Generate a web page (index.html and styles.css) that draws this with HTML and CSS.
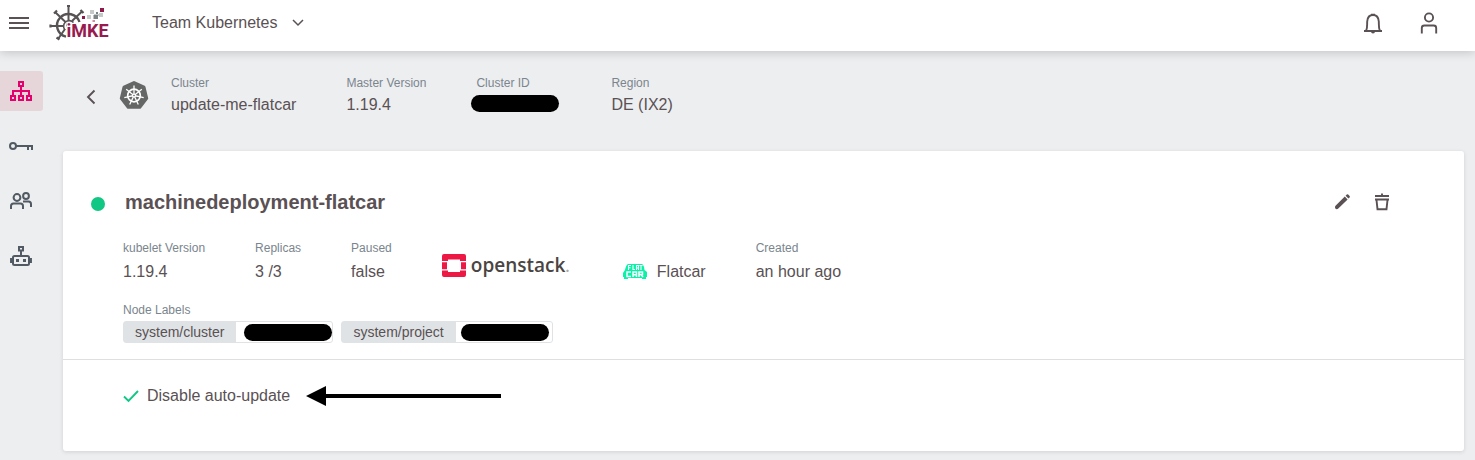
FILE: index.html
```html
<!DOCTYPE html>
<html lang="en">
<head>
<meta charset="utf-8">
<meta name="viewport" content="width=device-width, initial-scale=1">
<title>machinedeployment-flatcar</title>
<link rel="stylesheet" href="styles.css">
</head>
<body>
<header class="topbar">
  <button class="icon-button" aria-label="Menu">
    <svg width="20" height="14" viewBox="0 0 20 14" fill="none" stroke="currentColor" stroke-width="2"><path d="M0 2h20M0 7h20M0 12h20"/></svg>
  </button>
  <a class="brand" href="#" aria-label="iMKE">
    <svg width="62" height="38" viewBox="0 0 62 38">
      <g fill="none" stroke="#575253">
        <path stroke-width="2.400" d="M30.500 18A11.500 11.500 0 1 0 17 32.700"/>
        <path stroke-width="1.600" d="M24.500 18.500A5.500 5.500 0 1 0 16 26"/>
        <path stroke-width="2" d="M19.500 1v15M6 8l10.500 10M33 7.500L23 17M1 22h13M9 35l7-10"/>
        <path stroke-width="2.200" d="M18 2h3M5 9.500L8 6.500M31.500 6l3 3M1.500 20.500v3M7.500 33.500l3 2"/>
      </g>
      <circle cx="19.500" cy="21" r="2.300" fill="#575253"/>
      <text class="brand-name" x="17.500" y="33">iMKE</text>
      <g>
        <path fill="#8e1a4b" d="M51 4h4v4h-4zM33 12h3v3h-3z"/>
        <path fill="#c5c9c9" d="M41 6h4v4h-4zM45 10h5v2h-5zM38 11h4v4h-4zM50 9h4v4h-4z"/>
        <path fill="#7c8485" d="M44.500 11h4.500v4h-4.500zM47 8h2v2h-2z"/>
        <path fill="#d28ba4" d="M43.500 16h2.500v2h-2.500z"/>
      </g>
    </svg>
  </a>
  <button class="project-picker">Team Kubernetes
    <svg width="12" height="8" viewBox="0 0 12 8" fill="none" stroke="currentColor" stroke-width="1.500"><path d="M1 1l5 5 5-5"/></svg>
  </button>
  <div class="topbar-actions">
    <button class="icon-button" aria-label="Notifications">
      <svg width="20" height="22" viewBox="0 0 20 22" fill="none" stroke="currentColor" stroke-width="1.900"><path d="M1 19h18M3.200 18.500C4.500 16 4 13 4.200 9.500 4.500 5 6.500 3 10 3s5.500 2 5.800 6.500c.2 3.500-.3 6.500 1 9"/><path fill="currentColor" stroke="none" d="M8 1.200h4v2H8zM8 19h4a2 2 0 0 1-4 0z" transform="translate(0 .5)"/></svg>
    </button>
    <button class="icon-button" aria-label="Account">
      <svg width="20" height="22" viewBox="0 0 20 22" fill="none" stroke="currentColor" stroke-width="1.900"><circle cx="10" cy="5.500" r="4.100"/><path d="M2.800 21.500v-5.500q0-2.500 2.500-2.500h9.400q2.500 0 2.500 2.500v5.500"/></svg>
    </button>
  </div>
</header>

<div class="shell">
  <nav class="sidebar" aria-label="Project">
    <a class="nav-item nav-item-active" href="#" aria-label="Clusters">
      <svg width="24" height="24" viewBox="0 0 24 24" fill="none" stroke="currentColor" stroke-width="2"><path d="M10 3h4v4h-4zM2 17h4v4H2zM10 17h4v4h-4zM18 17h4v4h-4zM12 7v10M4 17v-5h16v5"/></svg>
    </a>
    <a class="nav-item" href="#" aria-label="SSH Keys">
      <svg width="24" height="24" viewBox="0 0 24 24" fill="none" stroke="currentColor" stroke-width="2"><circle cx="4" cy="12" r="3"/><path d="M7 12h17M19 12v4M23 12v4"/></svg>
    </a>
    <a class="nav-item" href="#" aria-label="Members">
      <svg width="24" height="24" viewBox="0 0 24 24" fill="none" stroke="currentColor" stroke-width="2"><circle cx="8" cy="8.500" r="3.400"/><circle cx="17" cy="7" r="2.900"/><path d="M2 20v-3q0-2.500 2.500-2.500h7q2.500 0 2.500 2.500v3M14 12.500h5.500q2.500 0 2.500 2.500v3"/></svg>
    </a>
    <a class="nav-item" href="#" aria-label="Service Accounts">
      <svg width="24" height="24" viewBox="0 0 24 24" fill="none" stroke="currentColor" stroke-width="2"><path d="M10 3h4v3.500h-4zM12 6v5"/><rect x="4" y="12" width="16" height="9" rx="1.500"/><path stroke-width="2.500" d="M2.300 14v5M21.700 14v5"/><path fill="currentColor" stroke="none" d="M7 15h3v3H7zM14 15h3v3h-3z"/></svg>
    </a>
  </nav>

  <main class="content">
    <section class="cluster-header">
      <button class="icon-button back-button" aria-label="Back">
        <svg width="10" height="16" viewBox="0 0 10 16" fill="none" stroke="currentColor" stroke-width="1.900"><path d="M8.500 1.500L2 8l6.500 6.500"/></svg>
      </button>
      <svg class="cluster-logo" width="30" height="30" viewBox="0 0 30 30">
        <path fill="#656666" stroke="#656666" stroke-width="3" stroke-linejoin="round" d="M15 2.500L25 7.200 27.700 18.300 20.800 27.300H9.200L2.300 18.300 5 7.200z"/>
        <g fill="none" stroke="#fff">
          <circle cx="15" cy="15.500" r="6.300" stroke-width="1.700"/>
          <path stroke-width="1.300" d="M15 15.500V5.500M15 15.500l7.800-6.200M15 15.500l9.700 2.200M15 15.500l4.300 9M15 15.500l-4.300 9M15 15.500l-9.700 2.200M15 15.500L7.200 9.300"/>
        </g>
        <circle cx="15" cy="15.500" r="2" fill="#fff"/><circle cx="15" cy="15.500" r=".8" fill="#656666"/>
      </svg>
      <dl class="facts">
        <div class="fact"><dt>Cluster</dt><dd>update-me-flatcar</dd></div>
        <div class="fact"><dt>Master Version</dt><dd>1.19.4</dd></div>
        <div class="fact fact-id"><dt>Cluster ID</dt><dd><span class="redacted"></span></dd></div>
        <div class="fact"><dt>Region</dt><dd>DE (IX2)</dd></div>
      </dl>
    </section>

    <article class="card">
      <div class="card-body">
        <div class="card-title">
          <span class="status" role="img" aria-label="Running"></span>
          <h1>machinedeployment-flatcar</h1>
          <div class="card-actions">
            <button class="icon-button" aria-label="Edit">
              <svg width="20" height="20" viewBox="0 0 20 20" fill="currentColor"><path d="M3.500 13.700L12.800 4.600l2.800 2.800-9.300 9.200q-1 .8-2.300.5-1.200-.6-1-2 0-.8.500-1.400zM13.600 3.800l1.200-1.200a1 1 0 0 1 1.400 0l1.400 1.400a1 1 0 0 1 0 1.400l-1.200 1.200z"/></svg>
            </button>
            <button class="icon-button" aria-label="Delete">
              <svg width="20" height="20" viewBox="0 0 20 20" fill="none" stroke="currentColor" stroke-width="1.900"><path d="M3 4h14M10 1.500V4M3 7.500h14M4.500 8l1 9.200h9l1-9.200"/></svg>
            </button>
          </div>
        </div>

        <dl class="facts">
          <div class="fact"><dt>kubelet Version</dt><dd>1.19.4</dd></div>
          <div class="fact"><dt>Replicas</dt><dd>3 /3</dd></div>
          <div class="fact"><dt>Paused</dt><dd>false</dd></div>
          <div class="fact provider">
            <dd class="openstack">
              <svg width="24" height="24" viewBox="0 0 24 24"><path fill="#ed1844" d="M2 0h20q2 0 2 2v5h-6V5.500H6V7H0V2q0-2 2-2zM0 8.300h5v7H0zM19 8.300h5v7h-5zM0 16.500h6V18h12v-1.500h6V21q0 2-2 2H2q-2 0-2-2z"/></svg>
              <span class="openstack-name">openstack<small>.</small></span>
            </dd>
          </div>
          <div class="fact system">
            <dd>
              <svg width="24" height="16" viewBox="0 0 24 16"><path fill="#09f2a8" d="M5 0h14q2 1 2.500 6L24 8v5h-1v2h-4v-1H5v1H1v-2H0V9l2-3Q3 1 5 0z"/><path fill="none" stroke="#fff" stroke-width="1.100" d="M5.500 6V1.500H8M5.500 3.700h2M10 1v4.500h2M13.500 6V1.500h2V6M13.500 4h2M16.500 1.500h3M18 1.500V6"/><path fill="none" stroke="#fff" stroke-width="1.500" d="M8 8H4v4.500h4M10 13V8h3.500v5M10 10.700h3.500M16 13V8h3.500v2.500H16M18 10.500l2 2.500"/></svg>
              Flatcar
            </dd>
          </div>
          <div class="fact"><dt>Created</dt><dd>an hour ago</dd></div>
        </dl>

        <div class="labels">
          <h2>Node Labels</h2>
          <ul>
            <li><span class="key">system/cluster</span><span class="value"><span class="redacted"></span></span></li>
            <li><span class="key">system/project</span><span class="value value-wide"><span class="redacted"></span></span></li>
          </ul>
        </div>
      </div>
      <div class="card-footer">
        <svg width="16" height="14" viewBox="0 0 16 14" fill="none" stroke="#12c684" stroke-width="1.900"><path d="M1 7.500L5.500 12 15 2"/></svg>
        <span>Disable auto-update</span>
        <svg class="arrow" width="195" height="20" viewBox="0 0 195 20"><path d="M0 10L20 0v8h175v4H20v8z"/></svg>
      </div>
    </article>
  </main>
</div>
</body>
</html>
```
FILE: styles.css
```css
* { box-sizing: border-box; }

body {
  margin: 0;
  background: #edeef0;
  color: #5a5154;
  font: 16px/20px "Liberation Sans", Arial, sans-serif;
}

h1, h2, dl, dd, ul { margin: 0; padding: 0; }

svg { flex: none; }

.icon-button {
  display: flex;
  padding: 0;
  border: 0;
  background: none;
  color: inherit;
  cursor: pointer;
}

.topbar {
  display: flex;
  align-items: center;
  height: 51px;
  padding: 0 36px 5px 9px;
  background: #fff;
  box-shadow: 0 1px 10px rgba(0, 0, 0, .2);
  position: relative;
}

.brand { display: flex; margin-left: 20px; }

.brand-name {
  font: bold 18px Roboto, sans-serif;
  fill: #981b50;
  stroke: #fff;
  stroke-width: 2px;
  paint-order: stroke;
}

.project-picker {
  display: flex;
  align-items: center;
  gap: 15px;
  margin-left: 41px;
  padding: 0;
  border: 0;
  background: none;
  color: inherit;
  font: inherit;
  cursor: pointer;
}

.topbar-actions { display: flex; gap: 36px; margin-left: auto; }

.shell { display: flex; }

.sidebar {
  display: flex;
  flex-direction: column;
  gap: 15px;
  flex: none;
  width: 43px;
  padding-top: 20px;
}

.nav-item {
  display: flex;
  align-items: center;
  height: 40px;
  padding-left: 9px;
  border-radius: 0 3px 3px 0;
  color: #515a62;
}

.nav-item-active { background: #e6d6da; color: #e5006d; }

.content { flex: 1; min-width: 0; padding: 22px 11px 9px 20px; }

.cluster-header {
  display: flex;
  align-items: center;
  padding-left: 23px;
  margin-bottom: 34px;
}

.back-button { padding-top: 4px; }

.cluster-logo { margin: 0 22px 0 23px; }

.facts { display: flex; gap: 50px; }

dt, .labels h2 {
  color: #7a858e;
  font-size: 12px;
  font-weight: normal;
  line-height: 20px;
}

.fact dd { margin-top: 4px; white-space: nowrap; }
.cluster-header dd { margin-top: 2px; padding-bottom: 2px; }
.fact-id { width: 85px; }
.fact-id .redacted { margin: 0 -5px; }

.redacted {
  display: block;
  width: 88px;
  height: 17px;
  border-radius: 9px;
  background: #000;
}

.card {
  border-radius: 3px;
  background: #fff;
  box-shadow: 0 1px 4px rgba(0, 0, 0, .12);
}

.card-body { padding: 39px 60px 16px; }

.card-title { display: flex; align-items: center; margin: 0 12px 24px -32px; }

.status {
  width: 14px;
  height: 14px;
  margin: 3px 20px 0 0;
  border-radius: 50%;
  background: #12c684;
}

h1 { font-size: 20px; line-height: 24px; }

.card-actions { display: flex; gap: 20px; margin-left: auto; }

.provider, .system { align-self: flex-end; }

.fact .openstack {
  display: flex;
  align-items: center;
  gap: 5px;
  width: 131px;
  padding-bottom: 4px;
}

.openstack-name {
  color: #4a4542;
  font: 600 19px/24px "Open Sans", sans-serif;
}

.openstack-name small { color: #aaa; font-size: 16px; }

.system dd { display: flex; align-items: center; gap: 10px; }

.labels { margin-top: 18px; }

.labels ul { display: flex; gap: 8px; list-style: none; margin-top: 1px; }

.labels li {
  display: flex;
  border: 1px solid #dfe3e5;
  border-radius: 3px;
  font-size: 14px;
}

.key { padding: 0 12px 0 11px; background: #dfe3e5; }
.value { display: flex; align-items: center; padding-left: 8px; }
.value-wide { padding: 0 3px 0 5px; }

.card-footer {
  display: flex;
  align-items: center;
  gap: 8px;
  padding: 26px 60px 45px;
  border-top: 1px solid #dedfe0;
}

.arrow { margin-left: 8px; }
```
